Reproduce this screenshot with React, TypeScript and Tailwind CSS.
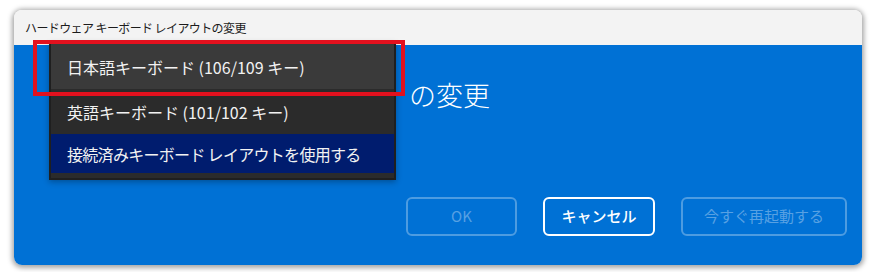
const jp = '"Noto Sans CJK JP", "Noto Sans", sans-serif';

function MenuItem({ label, tone }: { label: string; tone: 'hover' | 'plain' | 'selected' }) {
    const bg = tone === 'hover' ? 'bg-[#3a3a3a]' : tone === 'selected' ? 'bg-[#001c6e] tracking-[-0.7px]' : '';
    const h = tone === 'selected' ? 'h-[39px]' : 'h-[45px]';
    return (
        <div className={`${bg} ${h} flex items-center pl-[16px] text-[16px] text-[#f2f2f2]`}>
            {label}
        </div>
    );
}

export default function App() {
    return (
        <main className="w-[875px] h-[272px] bg-white pt-[10px] pl-[14px]" style={{ fontFamily: jp }}>
            <div className="relative w-[848px] h-[255px] rounded-[8px] shadow-[0_1px_5px_2px_rgba(0,0,0,0.35)] flex flex-col">
                <div className="h-[35px] bg-[#f3f3f3] rounded-t-[8px] flex items-center pl-[11px] text-[12px] tracking-[-0.6px] text-[#1b1b1b]">
                    ハードウェア キーボード レイアウトの変更
                </div>
                <div className="flex-1 bg-[#0071d5] rounded-b-[8px] flex flex-col">
                    {/* heading: the start is covered by the menu, only the tail shows */}
                    <h1 className="pt-[33px] pl-[395px] text-[27px] leading-[34px] font-light text-white whitespace-nowrap">
                        の変更
                    </h1>
                    <div className="flex-1" />
                    <div className="flex justify-end gap-[26px] pr-[15px] pb-[29px]">
                        <button className="w-[111px] h-[39px] rounded-[6px] border-2 border-white/30 text-[15px] text-white/35">OK</button>
                        <button className="w-[112px] h-[39px] rounded-[6px] border-2 border-white text-[15px] text-white font-medium">キャンセル</button>
                        <button className="w-[166px] h-[39px] rounded-[6px] border-2 border-white/30 text-[15px] text-white/35">今すぐ再起動する</button>
                    </div>
                </div>

                <div className="absolute left-[35px] top-[32px] w-[347px] bg-[#2b2b2b] border-2 border-[#1f1f1f] pb-[5px] shadow-[0_2px_6px_rgba(0,0,0,0.3)]">
                    <MenuItem label="日本語キーボード (106/109 キー)" tone="hover" />
                    <MenuItem label="英語キーボード (101/102 キー)" tone="plain" />
                    <MenuItem label="接続済みキーボード レイアウトを使用する" tone="selected" />
                </div>
                <div className="absolute left-[19px] top-[30px] w-[372px] h-[56px] border-4 border-[#e3111e]" />
            </div>
        </main>
    );
}
